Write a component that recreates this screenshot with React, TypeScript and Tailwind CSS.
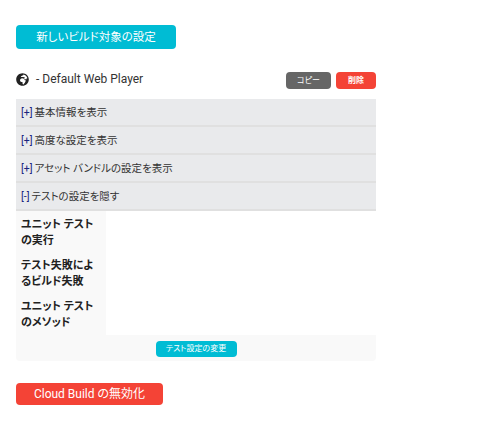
import React from "react";
import { FaGlobeAfrica } from "react-icons/fa";

const FONT = { fontFamily: '"Roboto", "Noto Sans CJK JP", sans-serif' };

const SECTIONS = [
  { mark: "[+]", label: "基本情報を表示" },
  { mark: "[+]", label: "高度な設定を表示" },
  { mark: "[+]", label: "アセット バンドルの設定を表示" },
  { mark: "[-]", label: "テストの設定を隠す" },
];

const TEST_ROWS = ["ユニット テストの実行", "テスト失敗によるビルド失敗", "ユニット テストのメソッド"];

export default function App() {
  return (
    <div style={FONT} className="w-[492px] h-[442px] bg-white text-[#333] overflow-hidden [font-feature-settings:'palt']">
      <div className="w-[360px] ml-4 pt-[25px]">
        <button className="block w-[160px] h-6 rounded bg-[#00bcd4] text-white text-[11.5px] leading-6 text-center">
          新しいビルド対象の設定
        </button>

        <div className="flex items-start justify-between mt-[22px] h-[28px]">
          <div className="flex items-center h-[14px] text-xs leading-[14px] mt-[1px]">
            <FaGlobeAfrica size={13} className="text-[#222]" />
            <span className="ml-[7px]">- Default Web Player</span>
          </div>
          <div className="flex gap-[5px] mt-[1px]">
            <button className="w-[45px] h-[17px] rounded-sm bg-[#666] text-white text-[8px] leading-[17px] text-center">
              コピー
            </button>
            <button className="w-10 h-[17px] rounded-sm bg-[#f44336] text-white text-[8px] leading-[17px] text-center font-bold">
              削除
            </button>
          </div>
        </div>

        <div>
          {SECTIONS.map((s) => (
            <div
              key={s.label}
              className="h-7 pl-[5px] bg-[#e9eaec] border-b-2 border-[#e0e0e0] text-[10.5px] leading-[28px] text-[#333]"
            >
              <span className="text-[#1a237e] mr-[2px]">{s.mark}</span>
              {s.label}
            </div>
          ))}
        </div>

        <div className="bg-[#f9f9f9] rounded-b">
          <div className="flex">
            <div className="w-[90px] px-[5px] pt-[6px] flex flex-col gap-[9px] pb-[4px]">
              {TEST_ROWS.map((row) => (
                <div key={row} className="text-[11px] leading-4 font-bold text-[#222]">
                  {row}
                </div>
              ))}
            </div>
            <div className="flex-1 bg-white" />
          </div>
          <div className="h-[26px] flex justify-center pt-[6px]">
            <button className="w-[81px] h-4 rounded-sm bg-[#00bcd4] text-white text-[8px] leading-4 text-center">
              テスト設定の変更
            </button>
          </div>
        </div>

        <button className="block mt-[22px] w-[147px] h-[22px] rounded bg-[#f44336] text-white text-xs leading-[22px] text-center">
          Cloud Build の無効化
        </button>
      </div>
    </div>
  );
}
